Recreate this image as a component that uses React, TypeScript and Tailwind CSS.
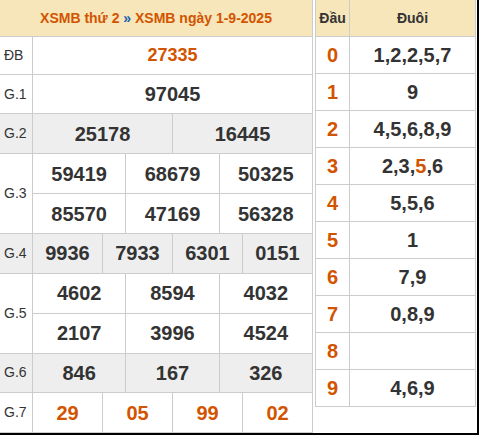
import React from "react";

const OR = "text-[#d35400]";

function Cell({ children, last, className = "" }: { children?: React.ReactNode; last?: boolean; className?: string }) {
  return (
    <div className={`flex-1 flex items-center justify-center ${last ? "" : "border-r border-[#cccccc]"} ${className}`}>
      {children}
    </div>
  );
}

function Row({ label, h, gray, children }: { label: string; h: string; gray?: boolean; children: React.ReactNode }) {
  return (
    <div className={`flex border-b border-[#cccccc] ${h} ${gray ? "bg-[#eeeeee]" : "bg-white"}`}>
      <div className="w-[33px] shrink-0 border-r border-[#cccccc] flex items-center pl-[4px] text-[14px] font-normal text-[#333]">{label}</div>
      <div className="flex-1 flex">{children}</div>
    </div>
  );
}

function MultiRow({ label, rows }: { label: string; rows: string[][] }) {
  return (
    <div className="flex bg-white">
      <div className="w-[33px] shrink-0 border-r border-b border-[#cccccc] flex items-center pl-[4px] text-[14px] font-normal text-[#333]">{label}</div>
      <div className="flex-1 flex flex-col">
        {rows.map((r, i) => (
          <div key={i} className="flex h-[40px] border-b border-[#cccccc]">
            {r.map((n, j) => (
              <Cell key={j} last={j === r.length - 1}>{n}</Cell>
            ))}
          </div>
        ))}
      </div>
    </div>
  );
}

export default function App() {
  const tails: [string, React.ReactNode][] = [
    ["0", "1,2,2,5,7"],
    ["1", "9"],
    ["2", "4,5,6,8,9"],
    ["3", <span key="3">2,3,<span className={OR}>5</span>,6</span>],
    ["4", "5,5,6"],
    ["5", "1"],
    ["6", "7,9"],
    ["7", "0,8,9"],
    ["8", ""],
    ["9", "4,6,9"],
  ];
  return (
    <div
      className="w-[479px] h-[435px] overflow-hidden bg-white border-r-2 border-b-2 border-black flex gap-[2px] text-[#333]"
      style={{ fontFamily: '"Liberation Sans", Arial, sans-serif' }}
    >
      {/* Left table */}
      <div className="w-[313px] shrink-0 border-r border-[#cccccc] flex flex-col font-bold text-[20px]">
        <div className="h-[37px] shrink-0 bg-[#f6e6b9] border-b border-[#cccccc] flex items-center justify-center text-[14px] text-[#d35400]">
          <span>XSMB thứ 2 <span className="text-[#1a5fb4]">»</span> XSMB ngày 1-9-2025</span>
        </div>
        <Row label="ĐB" h="h-[38px]">
          <Cell last className={`${OR} text-[18px]`}>27335</Cell>
        </Row>
        <Row label="G.1" h="h-[40px]">
          <Cell last>97045</Cell>
        </Row>
        <Row label="G.2" h="h-[40px]" gray>
          <Cell>25178</Cell>
          <Cell last>16445</Cell>
        </Row>
        <MultiRow label="G.3" rows={[["59419", "68679", "50325"], ["85570", "47169", "56328"]]} />
        <Row label="G.4" h="h-[40px]" gray>
          <Cell>9936</Cell>
          <Cell>7933</Cell>
          <Cell>6301</Cell>
          <Cell last>0151</Cell>
        </Row>
        <MultiRow label="G.5" rows={[["4602", "8594", "4032"], ["2107", "3996", "4524"]]} />
        <Row label="G.6" h="h-[40px]" gray>
          <Cell>846</Cell>
          <Cell>167</Cell>
          <Cell last>326</Cell>
        </Row>
        <Row label="G.7" h="h-[40px]">
          <Cell className={OR}>29</Cell>
          <Cell className={OR}>05</Cell>
          <Cell className={OR}>99</Cell>
          <Cell last className={OR}>02</Cell>
        </Row>
      </div>
      {/* Right table */}
      <div className="w-[161px] shrink-0 self-start border-l border-r border-[#cccccc] flex flex-col font-bold">
        <div className="flex h-[37px] bg-[#f6e6b9] border-b border-[#cccccc] text-[14px] text-[#333]">
          <div className="w-[34px] border-r border-[#cccccc] flex items-center justify-center">Đầu</div>
          <div className="flex-1 flex items-center justify-center">Đuôi</div>
        </div>
        {tails.map(([h, t]) => (
          <div key={h} className="flex h-[37px] border-b border-[#cccccc] text-[20px] bg-white">
            <div className={`w-[34px] border-r border-[#cccccc] flex items-center justify-center ${OR}`}>{h}</div>
            <div className="flex-1 flex items-center justify-center">{t}</div>
          </div>
        ))}
      </div>
    </div>
  );
}
